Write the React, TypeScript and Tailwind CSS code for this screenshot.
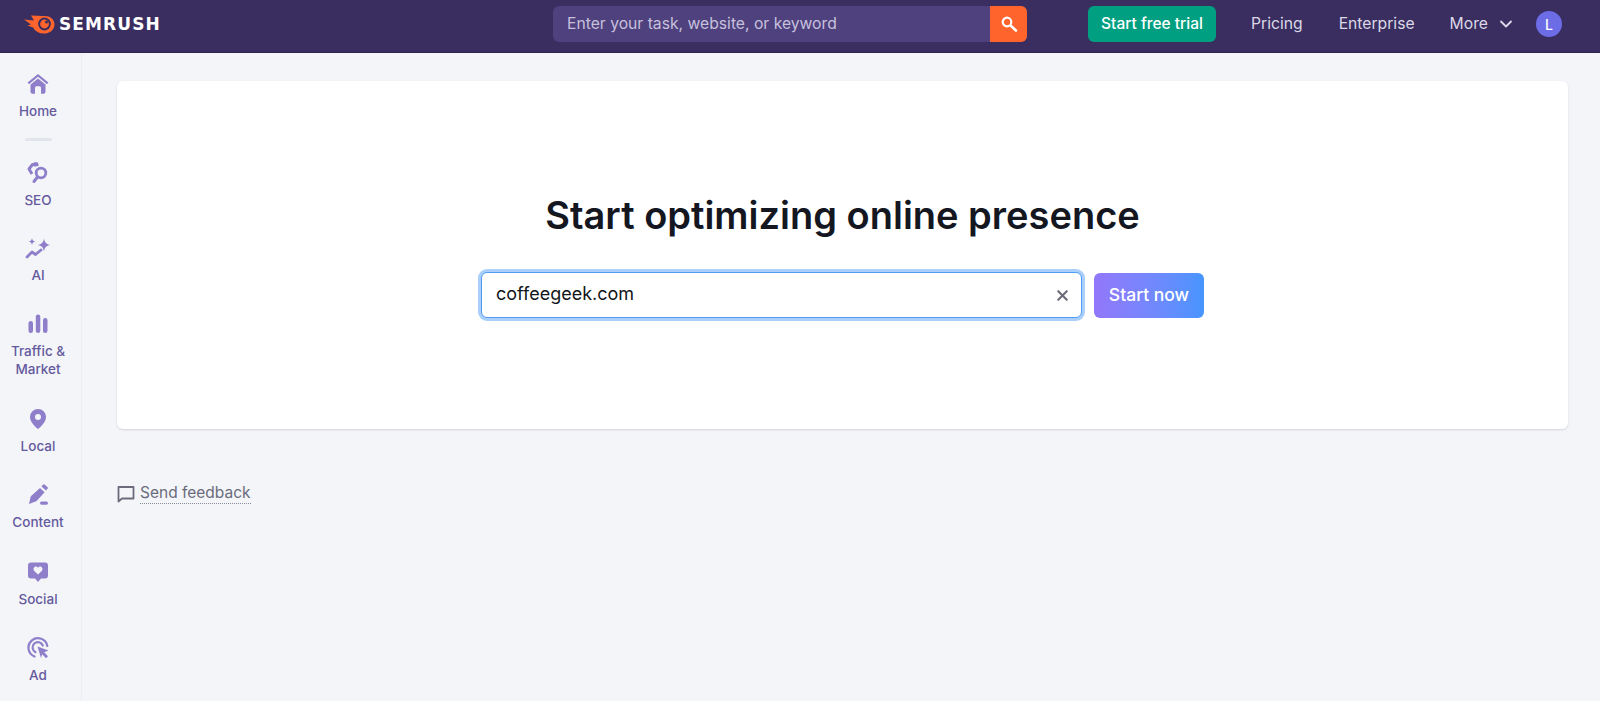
import { X, ChevronDown } from "lucide-react";

const ICON = "#8f7fcb";

function HomeIcon() {
  return (
    <svg width="24" height="24" viewBox="0 0 24 24" fill={ICON}>
      <path d="M1.600 10.600 12 2l10.400 8.600-1.400 1.600L12 4.800 3 12.200z" />
      <path d="M4.500 12.600 12 6.600l7.500 6v7.200a2 2 0 0 1-2 2H15v-6a1.500 1.500 0 0 0-1.500-1.500h-3A1.500 1.500 0 0 0 9 15.800v6H6.500a2 2 0 0 1-2-2z" />
    </svg>
  );
}

function SeoIcon() {
  return (
    <svg width="24" height="24" viewBox="0 0 24 24" fill="none" stroke={ICON}>
      <circle cx="15" cy="12" r="4.800" strokeWidth="2.800" />
      <path d="M11.500 16 8 20.500" strokeWidth="3" strokeLinecap="round" />
      <path d="M12 3.500H6.500L3 8l3 5" strokeWidth="3" strokeLinejoin="round" />
      <path d="M8 1.500h3.500l1 3-4 1z" fill={ICON} strokeWidth="0.500" />
    </svg>
  );
}

function AiIcon() {
  return (
    <svg width="27" height="24" viewBox="0 0 27 24" fill={ICON}>
      <path d="M19 2.500c.7 4 2.200 5.600 6.500 6.500-4.300.8-5.800 2.400-6.500 6.500-.7-4.100-2.200-5.700-6.500-6.500 4.300-.9 5.800-2.500 6.500-6.500z" />
      <path d="M7 2c.4 2.300 1.300 3.200 3.500 3.500C8.300 5.900 7.400 6.800 7 9c-.4-2.200-1.300-3.100-3.500-3.500C5.700 5.200 6.600 4.300 7 2z" />
      <path d="M2 21l5-5 3.500 2.500 5.500-4.500" fill="none" stroke={ICON} strokeWidth="2.800" strokeLinecap="round" strokeLinejoin="round" />
    </svg>
  );
}

function BarsIcon() {
  return (
    <svg width="24" height="24" viewBox="0 0 24 24" fill={ICON}>
      <rect x="2.500" y="9" width="4.500" height="12" rx="2.200" />
      <rect x="9.800" y="2.500" width="4.500" height="18.500" rx="2.200" />
      <rect x="17" y="6" width="4.500" height="15" rx="2.200" />
    </svg>
  );
}

function PinIcon() {
  return (
    <svg width="24" height="24" viewBox="0 0 24 24" fill={ICON}>
      <path
        fillRule="evenodd"
        d="M12 2a8 8 0 0 0-8 8c0 5 4.600 9.300 8 12 3.400-2.700 8-7 8-12a8 8 0 0 0-8-8zm0 5a3 3 0 1 1 0 6 3 3 0 0 1 0-6z"
      />
    </svg>
  );
}

function PenIcon() {
  return (
    <svg width="24" height="24" viewBox="0 0 24 24" fill={ICON}>
      <path d="M15.500 3.500 17.200 1.600a1 1 0 0 1 1.400-.1l3 2.700a1 1 0 0 1 .1 1.400L20 7.500z" />
      <path d="M14 5l4.600 4.200-8 8.800c-.3.300-.6.500-1 .6L3 21l1.500-6.800c.1-.4.300-.8.600-1.100z" />
      <rect x="14" y="18.500" width="8" height="3.200" rx="1.600" />
    </svg>
  );
}

function HeartIcon() {
  return (
    <svg width="24" height="24" viewBox="0 0 24 24" fill={ICON}>
      <path
        fillRule="evenodd"
        d="M5 2.500h14a3 3 0 0 1 3 3v10a3 3 0 0 1-3 3h-4l-3 3.500-3-3.500H5a3 3 0 0 1-3-3v-10a3 3 0 0 1 3-3zm7 5.200c-1-1.300-2.400-1.500-3.500-.7-1.300 1-1.300 2.800-.2 4l3.700 3.500 3.700-3.500c1.100-1.200 1.100-3-.2-4-1.100-.8-2.500-.6-3.500.7z"
      />
    </svg>
  );
}

function AdIcon() {
  return (
    <svg width="24" height="24" viewBox="0 0 24 24" fill="none" stroke={ICON} strokeWidth="2.200">
      <path d="M8.500 20.500A9.500 9.500 0 1 1 21.300 10" strokeLinecap="round" />
      <path d="M9.500 16.200A5.300 5.300 0 1 1 16.800 9.500" strokeLinecap="round" />
      <path d="M11.500 10.500l11 4-4.300 1.700 3.800 4-2 2-3.800-4-1.200 3.800z" fill={ICON} stroke="none" />
    </svg>
  );
}

const navItems = [
  { label: "SEO", icon: <SeoIcon />, cls: "h-[75px]" },
  { label: "AI", icon: <AiIcon />, cls: "h-[76px]" },
  { label: "Traffic & Market", icon: <BarsIcon />, cls: "h-[95px]" },
  { label: "Local", icon: <PinIcon />, cls: "h-[76px]" },
  { label: "Content", icon: <PenIcon />, cls: "h-[77px]" },
  { label: "Social", icon: <HeartIcon />, cls: "h-[76px]" },
  { label: "Ad", icon: <AdIcon />, cls: "h-[76px]" },
];

function NavItem({ label, icon, cls }: { label: string; icon: React.ReactNode; cls: string }) {
  return (
    <div className={`flex flex-col items-center shrink-0 ${cls}`}>
      <div className="h-[24px] flex items-center justify-center">{icon}</div>
      <span className="mt-[6px] w-[70px] text-center text-[13.500px] leading-[18px] font-medium text-[#655a9e]">
        {label}
      </span>
    </div>
  );
}

export default function App() {
  return (
    <div className="h-[701px] overflow-hidden bg-[#f4f5f9] font-['Inter',sans-serif] flex flex-col">
      <header className="h-[53px] shrink-0 bg-[#392e5f] border-b border-[#2f2552] pb-[4px] flex items-center">
        <div className="ml-[24px] flex items-center w-[529px]">
          <svg width="31" height="20" viewBox="0 0 31 20">
            <path
              d="M0 5.500 10 6.500 7 1.500l12 .5c6-.8 11.500 2.500 11.500 8.300 0 5.500-4.500 9.300-10.500 9.300-5 0-8.500-2-11-6L3.500 11.500 7 10.500z"
              fill="#ff642d"
            />
            <circle cx="20.500" cy="10" r="6.400" fill="#392e5f" />
            <circle cx="20.500" cy="10" r="4.400" fill="#ff642d" />
            <circle cx="22.500" cy="8" r="1.500" fill="#392e5f" />
          </svg>
          <span className="ml-[4px] font-['DejaVu_Sans',sans-serif] font-bold text-[17px] tracking-[1.100px] text-white leading-none">
            SEMRUSH
          </span>
        </div>
        <div className="w-[474px] h-[36px] rounded-[6px] bg-[#4e417d] flex items-center overflow-hidden">
          <span className="flex-1 pl-[14px] text-[15.700px] text-[#c7c0dd]">Enter your task, website, or keyword</span>
          <div className="w-[37px] h-full bg-[#ff642d] flex items-center justify-center">
            <svg width="18" height="18" viewBox="0 0 18 18" fill="none" stroke="#fff">
              <circle cx="7" cy="7" r="4.300" strokeWidth="2.200" />
              <path d="M10.500 10.500 16 15.500" strokeWidth="2.600" strokeLinecap="round" />
            </svg>
          </div>
        </div>
        <div className="ml-[61px] w-[128px] h-[36px] rounded-[6px] bg-[#009f81] flex items-center justify-center text-[15.500px] font-medium text-white">
          Start free trial
        </div>
        <span className="ml-[35px] text-[15.700px] text-[#dcd8e8]">Pricing</span>
        <span className="ml-[36px] text-[15.700px] text-[#dcd8e8]">Enterprise</span>
        <span className="ml-[35px] text-[15.700px] text-[#dcd8e8]">More</span>
        <ChevronDown className="ml-[8px] text-[#dcd8e8]" size={20} strokeWidth={2.200} />
        <div className="ml-[20px] w-[26px] h-[26px] rounded-full bg-[#6c6ce6] flex items-center justify-center text-[14px] font-medium text-white">
          L
        </div>
      </header>

      <div className="flex flex-1 min-h-0">
        <aside className="w-[82px] shrink-0 border-r border-[#eceef4] bg-[#f4f5f9] pr-[5px] flex flex-col items-center pt-[19px]">
          <div className="flex flex-col items-center h-[66px] shrink-0">
            <HomeIcon />
            <span className="mt-[6px] text-[13.500px] leading-[18px] font-medium text-[#655a9e]">Home</span>
          </div>
          <div className="w-[27px] h-[3px] rounded-full bg-[#e2e4ec] mb-[20px] shrink-0" />
          {navItems.map((item) => (
            <NavItem key={item.label} {...item} />
          ))}
        </aside>

        <main className="flex-1 pl-[35px] pr-[32px] pt-[28px]">
          <section className="h-[348px] rounded-[6px] bg-white shadow-[0_1px_2px_rgba(30,30,60,0.15)] flex flex-col items-center pt-[106px]">
            <h1 className="text-[38px] leading-[56px] font-semibold text-[#14171f]">
              Start optimizing online presence
            </h1>
            <div className="mt-[29px] flex items-center gap-[12px]">
              <div className="w-[601px] h-[46px] rounded-[6px] border-[1.500px] border-[#4f9bf5] ring-[3px] ring-[#a9cffa] bg-white flex items-center pl-[14px] pr-[10px]">
                <span className="flex-1 text-[18px] leading-[24px] -translate-y-[1px] text-[#111418]">coffeegeek.com</span>
                <X size={17} strokeWidth={3} className="text-[#6b6d78]" />
              </div>
              <button className="w-[110px] h-[45px] rounded-[6px] bg-gradient-to-r from-[#9277fb] to-[#4695fe] text-[17.500px] font-medium text-white">
                Start now
              </button>
            </div>
          </section>

          <div className="mt-[54px] flex items-center gap-[5px]">
            <svg width="18" height="18" viewBox="0 0 18 18" fill="none" stroke="#6a6c7c" strokeWidth="1.800">
              <path d="M1.500 2h15v11.500H5L1.500 16.500z" strokeLinejoin="round" />
            </svg>
            <span className="text-[15.500px] leading-[20px] text-[#6a6c7c] border-b border-dotted border-[#8a8c9a]">
              Send feedback
            </span>
          </div>
        </main>
      </div>
    </div>
  );
}
